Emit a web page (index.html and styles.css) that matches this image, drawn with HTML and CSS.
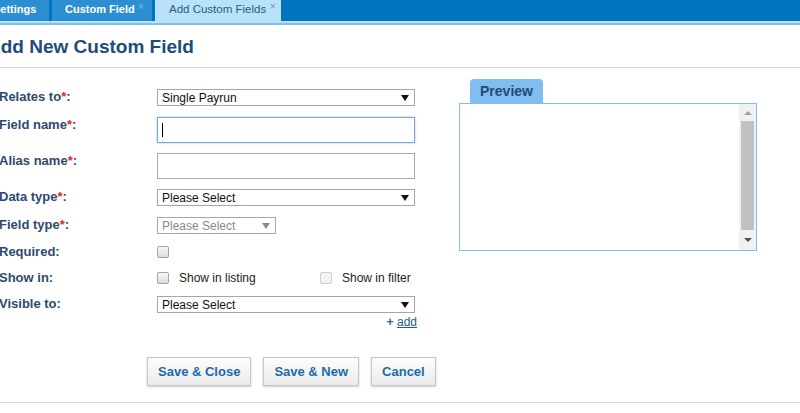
FILE: index.html
```html
<!DOCTYPE html>
<html lang="en">
<head>
    <meta charset="UTF-8">
    <title>Add Custom Fields</title>
    <link rel="stylesheet" href="styles.css">
</head>
<body>
    <div class="topbar">
        <div class="tab tab-first">Settings</div>
        <div class="tab">Custom Field<span class="close">&times;</span></div>
        <div class="tab active">Add Custom Fields<span class="close">&times;</span></div>
    </div>
    <div class="strip"></div>

    <div class="page-head">
        <h1>Add New Custom Field</h1>
    </div>

    <div class="main">
        <div class="form">
            <div class="rows">
                <label class="lbl">Relates to<span class="req">*</span>:</label>
                <div class="select"><span>Single Payrun</span><i class="arrow"></i></div>

                <label class="lbl">Field name<span class="req">*</span>:</label>
                <div class="input focused"><span class="caret"></span></div>

                <label class="lbl">Alias name<span class="req">*</span>:</label>
                <div class="input"></div>

                <label class="lbl">Data type<span class="req">*</span>:</label>
                <div class="select"><span>Please Select</span><i class="arrow"></i></div>

                <label class="lbl">Field type<span class="req">*</span>:</label>
                <div class="select small disabled"><span>Please Select</span><i class="arrow"></i></div>

                <label class="lbl">Required:</label>
                <div class="checks"><span class="check"></span></div>

                <label class="lbl">Show in:</label>
                <div class="checks">
                    <span class="check-item first"><span class="check"></span>Show in listing</span>
                    <span class="check-item"><span class="check light"></span>Show in filter</span>
                </div>

                <label class="lbl">Visible to:</label>
                <div class="field-wrap">
                    <div class="select"><span>Please Select</span><i class="arrow"></i></div>
                    <div class="add-link"><b>+</b> <a href="#">add</a></div>
                </div>
            </div>

            <div class="buttons">
                <button class="btn">Save &amp; Close</button>
                <button class="btn">Save &amp; New</button>
                <button class="btn">Cancel</button>
            </div>
        </div>

        <div class="preview">
            <div class="preview-tab">Preview</div>
            <div class="preview-box">
                <div class="preview-content"></div>
                <div class="scrollbar">
                    <i class="sb-up"></i>
                    <div class="sb-thumb"></div>
                    <i class="sb-down"></i>
                </div>
            </div>
        </div>
    </div>
    <div class="foot-line"></div>
</body>
</html>
```

FILE: styles.css
```css
body {
    margin: 0;
    font-family: "Liberation Sans", Arial, sans-serif;
    background: #fff;
    overflow: hidden;
}
.topbar {
    display: flex;
    height: 21px;
    background: #0074bd;
}
.tab {
    box-sizing: border-box;
    height: 21px;
    line-height: 19px;
    padding-left: 13px;
    margin-right: 3px;
    width: 100px;
    background: #2d8fd2;
    color: #fff;
    font-size: 11px;
    font-weight: bold;
    position: relative;
    white-space: nowrap;
}
.tab-first {
    margin-left: -7px;
    width: 56px;
    padding-left: 0;
}
.tab.active {
    width: 126px;
    padding-left: 14px;
    background: #b9e2f9;
    color: #255d8a;
    font-weight: normal;
    font-size: 11.5px;
}
.close {
    position: absolute;
    top: 0;
    right: 8px;
    line-height: 12px;
    font-size: 11px;
    font-weight: normal;
    color: #7fb4df;
}
.active .close {
    right: 5px;
    color: #6b95bd;
}
.strip {
    height: 2px;
    background: #b9e2f9;
    border-bottom: 2px solid #80bdf0;
}
.page-head {
    padding: 11px 0 9px;
    border-bottom: 1px solid #d9d9d9;
}
h1 {
    margin: 0 0 0 -13px;
    font-size: 19px;
    line-height: 22px;
    color: #234a7c;
}
.main {
    display: flex;
    margin-left: -1px;
}
.form {
    width: 460px;
    padding-top: 21px;
}
.rows {
    display: grid;
    grid-template-columns: 158px 258px;
    grid-template-rows: 18px 26px 26px 18px 17px 16px 16px auto;
    row-gap: 10px;
    align-items: start;
}
.lbl {
    font-size: 13px;
    font-weight: bold;
    line-height: 16px;
    color: #2d4a6d;
}
.req {
    color: #e42323;
}
.select {
    box-sizing: border-box;
    height: 17px;
    border: 1px solid #a6a6a6;
    display: flex;
    align-items: center;
    justify-content: space-between;
    padding: 0 5px 0 4px;
    font-size: 12px;
    color: #111;
}
.select.small {
    width: 119px;
}
.select.disabled {
    color: #8a8a8a;
}
.arrow {
    width: 0;
    height: 0;
    border-left: 4px solid transparent;
    border-right: 4px solid transparent;
    border-top: 6px solid #111;
}
.disabled .arrow {
    border-top-color: #8a8a8a;
}
.input {
    box-sizing: border-box;
    height: 26px;
    border: 1px solid #a9a9a9;
    padding: 5px 4px;
}
.input.focused {
    border-color: #7aa6e3;
    box-shadow: 0 0 2px rgba(80, 140, 220, 0.5);
}
.caret {
    display: block;
    width: 1px;
    height: 14px;
    background: #000;
}
.checks {
    display: flex;
    align-items: center;
    height: 16px;
    font-size: 12px;
    color: #222;
}
.check {
    display: inline-block;
    box-sizing: border-box;
    width: 12px;
    height: 12px;
    border: 1px solid #a3a3a3;
    border-radius: 2px;
    background: linear-gradient(#f6f6f6, #dedede);
    margin-right: 10px;
}
.check.light {
    border-color: #cfcfcf;
    background: #f3f3f3;
}
.check-item {
    display: flex;
    align-items: center;
}
.check-item.first {
    width: 163px;
}
.add-link {
    text-align: right;
    font-size: 12px;
    margin-top: 2px;
    margin-right: -2px;
    color: #1f6aa5;
}
.add-link a {
    color: #1d5e96;
}
.buttons {
    display: flex;
    gap: 12px;
    margin-top: 28px;
    padding-left: 148px;
}
.btn {
    height: 29px;
    padding: 0 10px;
    border: 1px solid #c6c6c6;
    background: linear-gradient(#fdfdfd, #ebebeb);
    box-shadow: 0 1px 2px rgba(0, 0, 0, 0.2);
    color: #1d6aa8;
    font-family: "Liberation Sans", Arial, sans-serif;
    font-size: 13px;
    font-weight: bold;
}
.preview {
    margin-top: 11px;
    width: 298px;
}
.preview-tab {
    display: inline-block;
    margin-left: 11px;
    width: 73px;
    height: 24px;
    line-height: 25px;
    text-align: center;
    background: #80bdf0;
    border-radius: 4px 4px 0 0;
    font-size: 14px;
    font-weight: bold;
    color: #1f4d78;
    vertical-align: top;
}
.preview-box {
    display: flex;
    height: 146px;
    border: 1px solid #80bdf0;
}
.preview-content {
    flex: 1;
}
.scrollbar {
    width: 17px;
    background: #f1f1f1;
    display: flex;
    flex-direction: column;
    align-items: center;
}
.sb-up, .sb-down {
    width: 0;
    height: 0;
    border-left: 4px solid transparent;
    border-right: 4px solid transparent;
}
.sb-up {
    margin-top: 7px;
    border-bottom: 4px solid #a3a3a3;
}
.sb-down {
    margin-top: 8px;
    border-top: 4px solid #505050;
}
.sb-thumb {
    margin-top: 6px;
    width: 13px;
    height: 109px;
    background: #c1c1c1;
}
.foot-line {
    margin-top: 16px;
    border-top: 1px solid #d9d9d9;
}
```
